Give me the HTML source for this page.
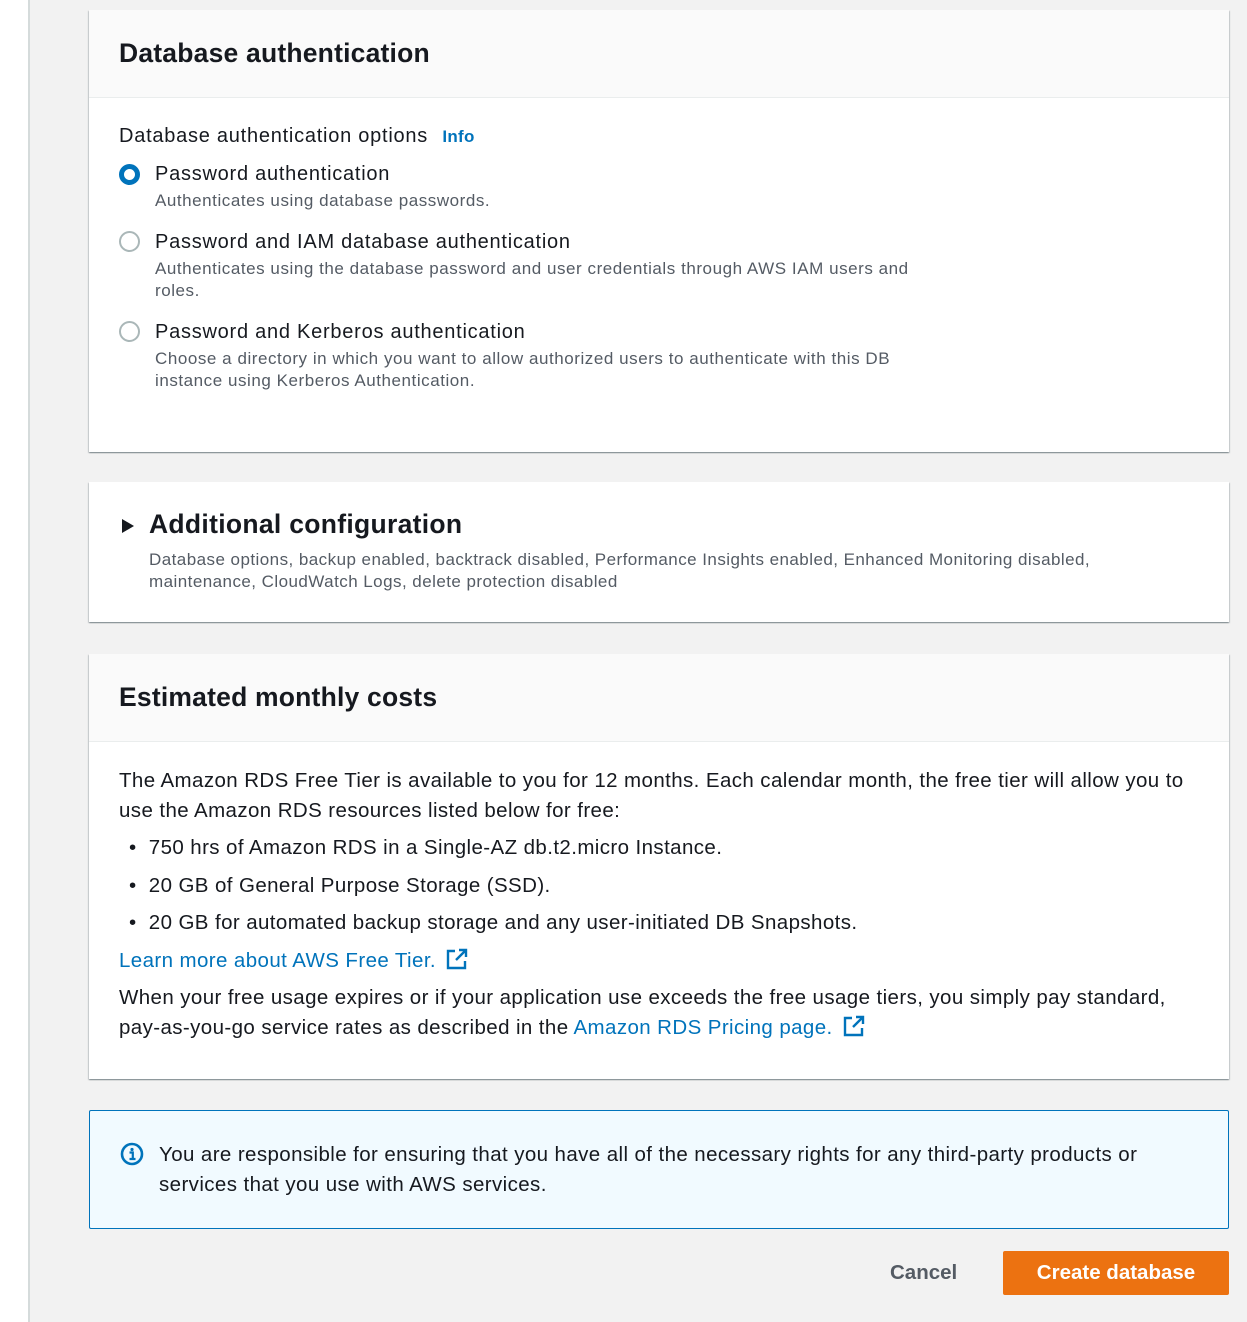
<!DOCTYPE html>
<html><head><meta charset="utf-8"><style>
*{margin:0;padding:0;box-sizing:border-box}
body{width:1247px;height:1322px;background:#f2f2f2;font-family:"Liberation Sans",sans-serif;color:#16191f;position:relative;overflow:hidden}
.side{position:absolute;left:0;top:0;width:30px;height:1322px;background:#fff;border-right:2px solid #d5dbdb}
.card{position:absolute;left:89px;width:1140px;background:#fff;box-shadow:0 1px 1px 0 rgba(0,28,36,.3),1px 1px 1px 0 rgba(0,28,36,.15),-1px 1px 1px 0 rgba(0,28,36,.15)}
.hd{background:#fafafa;border-bottom:1px solid #eaeded;padding:0 30px;font-weight:bold;font-size:26.5px;display:flex;align-items:center;letter-spacing:0.2px}
.abs{position:absolute;white-space:nowrap}
.t18{font-size:20px;letter-spacing:0.75px}
.d{font-size:17px;color:#545b64;line-height:22px;letter-spacing:0.55px}
.radio{position:absolute;left:30px;width:21px;height:21px;border-radius:50%;border:2px solid #aab7b8;background:#fff}
.radio.on{border:5px solid #0073bb}
a{color:#0073bb;text-decoration:none}
.c{font-size:20.5px;line-height:30px;letter-spacing:0.4px}
</style></head><body>
<div class="side"></div>

<div class="card" style="top:10px;height:442px">
  <div class="hd" style="height:88px">Database authentication</div>
  <div class="abs t18" style="left:30px;top:115px">Database authentication options <b style="color:#0073bb;font-size:17px;margin-left:8px;letter-spacing:0.3px">Info</b></div>
  <div class="radio on" style="top:154px"></div>
  <div class="abs t18" style="left:66px;top:153px">Password authentication</div>
  <div class="abs d" style="left:66px;top:180px">Authenticates using database passwords.</div>
  <div class="radio" style="top:221px"></div>
  <div class="abs t18" style="left:66px;top:221px">Password and IAM database authentication</div>
  <div class="abs d" style="left:66px;top:248px">Authenticates using the database password and user credentials through AWS IAM users and<br>roles.</div>
  <div class="radio" style="top:311px"></div>
  <div class="abs t18" style="left:66px;top:311px">Password and Kerberos authentication</div>
  <div class="abs d" style="left:66px;top:338px">Choose a directory in which you want to allow authorized users to authenticate with this DB<br>instance using Kerberos Authentication.</div>
</div>

<div class="card" style="top:482px;height:140px">
  <svg class="abs" style="left:32px;top:36px" width="14" height="16"><path d="M1 1L13 8L1 15Z" fill="#16191f"/></svg>
  <div class="abs" style="left:60px;top:27px;font-size:26.5px;font-weight:bold;letter-spacing:0.3px">Additional configuration</div>
  <div class="abs d" style="left:60px;top:67px;letter-spacing:0.45px">Database options, backup enabled, backtrack disabled, Performance Insights enabled, Enhanced Monitoring disabled,<br>maintenance, CloudWatch Logs, delete protection disabled</div>
</div>

<div class="card" style="top:654px;height:425px">
  <div class="hd" style="height:88px">Estimated monthly costs</div>
  <div class="abs c" style="left:30px;top:112px">The Amazon RDS Free Tier is available to you for 12 months. Each calendar month, the free tier will allow you to<br>use the Amazon RDS resources listed below for free:</div>
  <div class="abs c" style="left:40px;top:179px">•&nbsp; 750 hrs of Amazon RDS in a Single-AZ db.t2.micro Instance.</div>
  <div class="abs c" style="left:40px;top:217px">•&nbsp; 20 GB of General Purpose Storage (SSD).</div>
  <div class="abs c" style="left:40px;top:254px">•&nbsp; 20 GB for automated backup storage and any user-initiated DB Snapshots.</div>
  <div class="abs c" style="left:30px;top:292px"><a>Learn more about AWS Free Tier. <svg width="22" height="22" viewBox="0 0 22 22" style="vertical-align:-3px;margin-left:4px"><path d="M9 3H2v17h17v-7M13 2h7v7M20 2L10 12" fill="none" stroke="#0073bb" stroke-width="2.4"/></svg></a></div>
  <div class="abs c" style="left:30px;top:329px">When your free usage expires or if your application use exceeds the free usage tiers, you simply pay standard,<br>pay-as-you-go service rates as described in the <a>Amazon RDS Pricing page. <svg width="22" height="22" viewBox="0 0 22 22" style="vertical-align:-3px;margin-left:4px"><path d="M9 3H2v17h17v-7M13 2h7v7M20 2L10 12" fill="none" stroke="#0073bb" stroke-width="2.4"/></svg></a></div>
</div>

<div class="abs" style="left:89px;top:1110px;width:1140px;height:119px;background:#f1faff;border:1px solid #0073bb;border-radius:2px">
  <svg class="abs" style="left:30px;top:31px" width="24" height="24" viewBox="0 0 24 24"><circle cx="12" cy="12" r="10" fill="none" stroke="#0073bb" stroke-width="2.6"/><circle cx="12" cy="7.5" r="1.6" fill="#0073bb"/><path d="M9.5 10.5h3.3v6M9.5 17h6" fill="none" stroke="#0073bb" stroke-width="2.2"/></svg>
  <div class="abs c" style="left:69px;top:29px">You are responsible for ensuring that you have all of the necessary rights for any third-party products or<br>services that you use with AWS services.</div>
</div>

<div class="abs" style="left:890px;top:1261px;font-size:20.5px;font-weight:bold;color:#545b64">Cancel</div>
<div class="abs" style="left:1003px;top:1251px;width:226px;height:44px;background:#ec7211;border-radius:2px;color:#fff;font-weight:bold;font-size:20.5px;text-align:center;line-height:44px">Create database</div>
</body></html>
